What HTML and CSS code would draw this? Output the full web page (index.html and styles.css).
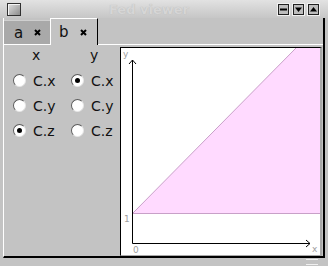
FILE: index.html
```html
<!DOCTYPE html>
<html lang="en">
<head>
  <meta charset="UTF-8" />
  <title>Fed viewer</title>
  <link rel="stylesheet" href="styles.css">
</head>
<body>

  <div class="titlebar">
    <span class="win-icon"></span>
    <span class="title">Fed viewer</span>
    <div class="win-buttons">
      <svg class="win-btn" width="13" height="13" viewBox="0 0 13 13">
        <rect x="0.5" y="0.5" width="12" height="12" fill="#c8c8c8" stroke="#f0f0f0"/>
        <rect x="1.5" y="1.5" width="10" height="10" fill="#bdbdbd" stroke="#202020"/>
        <rect x="3" y="5.5" width="7" height="2" fill="#000"/>
      </svg>
      <svg class="win-btn" width="13" height="13" viewBox="0 0 13 13">
        <rect x="0.5" y="0.5" width="12" height="12" fill="#c8c8c8" stroke="#f0f0f0"/>
        <rect x="1.5" y="1.5" width="10" height="10" fill="#bdbdbd" stroke="#202020"/>
        <polygon points="3,4.5 10,4.5 6.5,9" fill="#000"/>
      </svg>
      <svg class="win-btn" width="13" height="13" viewBox="0 0 13 13">
        <rect x="0.5" y="0.5" width="12" height="12" fill="#c8c8c8" stroke="#f0f0f0"/>
        <rect x="1.5" y="1.5" width="10" height="10" fill="#bdbdbd" stroke="#202020"/>
        <polygon points="3,8.5 10,8.5 6.5,4" fill="#000"/>
      </svg>
    </div>
  </div>

  <div class="frame">
    <div class="tabs">
      <div class="tab">
        <span>a</span>
        <svg class="close" width="7" height="7" viewBox="0 0 7 7"><path d="M1 1L6 6M6 1L1 6" stroke="#000" stroke-width="2"/></svg>
      </div>
      <div class="tab active">
        <span>b</span>
        <svg class="close" width="7" height="7" viewBox="0 0 7 7"><path d="M1 1L6 6M6 1L1 6" stroke="#000" stroke-width="2"/></svg>
      </div>
    </div>

    <div class="pane">
      <div class="choices">
        <div class="head">x</div>
        <div class="head">y</div>

        <label class="radio"><span class="dot"></span>C.x</label>
        <label class="radio"><span class="dot on"></span>C.x</label>
        <label class="radio"><span class="dot"></span>C.y</label>
        <label class="radio"><span class="dot"></span>C.y</label>
        <label class="radio"><span class="dot on"></span>C.z</label>
        <label class="radio"><span class="dot"></span>C.z</label>
      </div>

      <div class="plot">
        <svg width="199" height="207" viewBox="0 0 199 207">
          <polygon points="12,165 175,0 199,0 199,165" fill="#ffdaff"/>
          <path d="M12 165L175 0M12 165.5H199" stroke="#c8a0c8" fill="none"/>
          <path d="M11.5 12V195.5H189" stroke="#000" fill="none"/>
          <polyline points="8,16 11.5,12 15,16" stroke="#000" fill="none"/>
          <polyline points="185,192 189,195.5 185,199" stroke="#000" fill="none"/>
          <text class="lbl" x="2" y="9">y</text>
          <text class="lbl" x="3" y="174">1</text>
          <text class="lbl" x="12" y="205">0</text>
          <text class="lbl" x="191" y="204">x</text>
        </svg>
      </div>
    </div>
  </div>

  <div class="bottom">
    <span class="grip"></span>
  </div>

</body>
</html>
```

FILE: styles.css
```css
body {
  margin: 0;
  width: 328px;
  height: 266px;
  overflow: hidden;
  background-color: #c3c3c3;
  font-family: 'DejaVu Sans', sans-serif;
  color: #111;
}
.titlebar {
  display: flex;
  align-items: center;
  height: 18px;
  padding: 0 8px 0 7px;
  background: linear-gradient(#e2e2e2, #c6c6c6);
}
.win-icon {
  width: 12px;
  height: 11px;
  border: 1px solid #303030;
  box-shadow: inset 1px 1px #f4f4f4;
  background: linear-gradient(135deg, #e0e0e0, #8c8c8c);
}
.title {
  flex: 1;
  text-align: center;
  font-size: 13px;
  font-weight: bold;
  color: #d6d6d6;
  text-shadow: 0 0 1px #b4b4b4;
}
.win-buttons {
  display: flex;
  gap: 2px;
}
.win-btn {
  display: block;
}
.frame {
  margin-left: 3px;
  width: 319px;
  border-left: 1px solid #fff;
  border-right: 2px solid #000;
  border-bottom: 2px solid #000;
}
.tabs {
  display: flex;
  align-items: flex-end;
  height: 26px;
}
.tab {
  display: flex;
  align-items: center;
  justify-content: space-between;
  box-sizing: border-box;
  width: 46px;
  height: 24px;
  padding: 0 9px 0 10px;
  font-size: 15px;
  background-color: #a9a9a9;
  border-top: 1px solid #cfcfcf;
}
.tab.active {
  width: 48px;
  height: 27px;
  margin-bottom: -1px;
  padding: 0 10px 0 8px;
  background-color: #c3c3c3;
  border-top: 1px solid #fff;
  border-left: 1px solid #fff;
  border-right: 1px solid #000;
}
.close {
  display: block;
}
.pane {
  display: flex;
  height: 211px;
  border-top: 1px solid #fff;
}
.choices {
  width: 107px;
  padding-left: 9px;
  display: grid;
  grid-template-columns: 58px 1fr;
  grid-template-rows: 23px 25px 25px 25px;
  align-content: start;
}
.head {
  font-size: 14px;
  padding-left: 19px;
  line-height: 21px;
}
.radio {
  display: flex;
  align-items: center;
  gap: 7px;
  font-size: 14px;
}
.dot {
  box-sizing: border-box;
  width: 13px;
  height: 13px;
  border-radius: 50%;
  border: 1px solid;
  border-color: #5a5a5a #e6e6e6 #e6e6e6 #5a5a5a;
  background-color: #fff;
  display: flex;
  align-items: center;
  justify-content: center;
}
.dot.on::after {
  content: "";
  width: 5px;
  height: 5px;
  border-radius: 50%;
  background-color: #000;
}
.plot {
  margin-top: 2px;
  width: 199px;
  height: 207px;
  border-top: 1px solid #000;
  border-left: 1px solid #000;
  border-right: 2px solid #a8a8a8;
  border-bottom: 1px solid #a8a8a8;
  background-color: #fff;
}
.plot svg {
  display: block;
}
.lbl {
  font-family: 'DejaVu Sans', sans-serif;
  font-size: 9px;
  fill: #a0a0a0;
}
.bottom {
  position: relative;
  height: 8px;
}
.grip {
  position: absolute;
  right: 10px;
  top: 1px;
  width: 12px;
  height: 4px;
  border-top: 1px solid #f0f0f0;
  border-bottom: 1px solid #f0f0f0;
}
```
